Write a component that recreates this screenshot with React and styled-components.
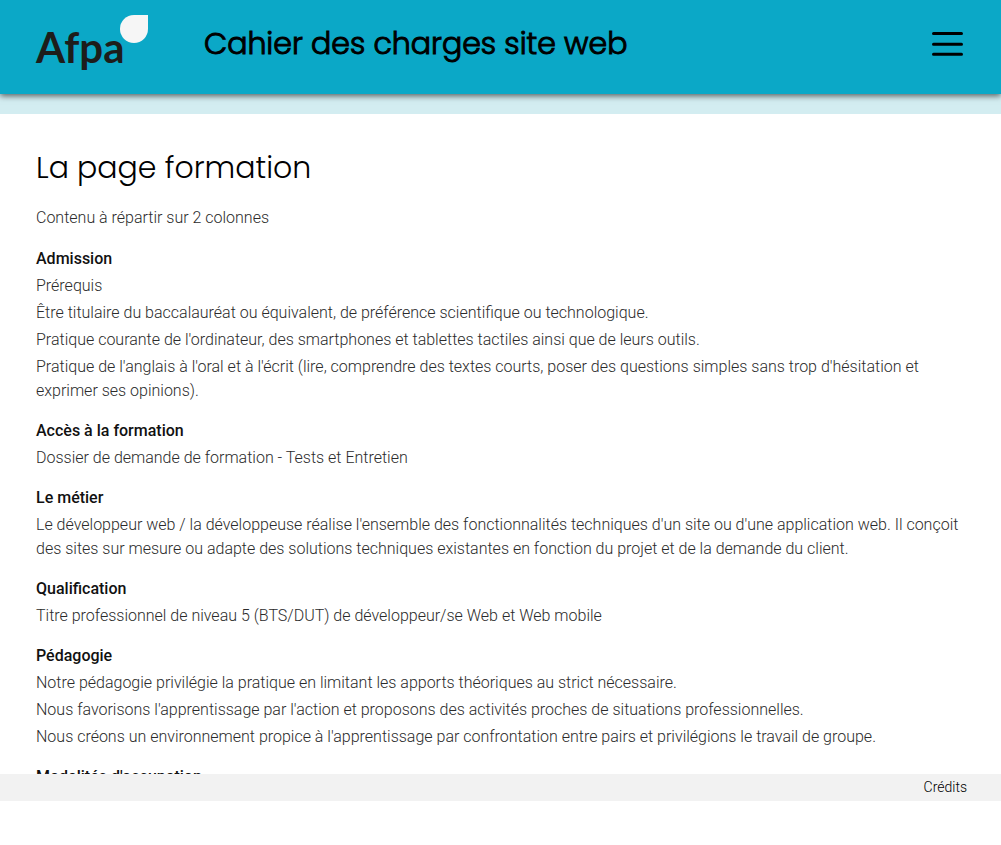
import React from "react";
import styled, { createGlobalStyle } from "styled-components";

const GlobalStyle = createGlobalStyle`
  *, *::before, *::after { box-sizing: border-box; }
  body {
    margin: 0;
    background: #fff;
    color: #2b2b2b;
    font: 300 16px/24px Roboto, sans-serif;
  }
  h1, h2, h3, p { margin: 0; }
`;

const titleFont = `Poppins, Inter, sans-serif`;

const Page = styled.div`
  display: flex;
  flex-direction: column;
  height: 100vh;
  padding-bottom: 44px;
`;

const Header = styled.header`
  flex: none;
  display: flex;
  align-items: center;
  height: 94px;
  padding: 0 36px 6px;
  background: #0ba8c7;
  box-shadow: 0 2px 6px rgba(0, 0, 0, 0.6);
  z-index: 1;
`;

const Logo = styled.a`
  display: flex;
  width: 112px;
  height: 58px;
  margin-right: 56px;
  color: #1d1d1b;
  font: 700 42px/64px Lato, sans-serif;
  text-decoration: none;
`;

const LogoName = styled.span`
  width: 84px;
  white-space: nowrap;
`;

const LogoDrop = styled.svg`
  flex: none;
  width: 28px;
  height: 28px;
`;

const SiteTitle = styled.h1`
  flex: 1;
  color: #000;
  font: 300 30px/48px ${titleFont};
  -webkit-text-stroke: 1px #000;
`;

const MenuButton = styled.button`
  display: flex;
  padding: 0;
  border: 0;
  background: none;
  cursor: pointer;
`;

const Band = styled.div`
  flex: none;
  height: 20px;
  background: #d3edf1;
`;

const Main = styled.main`
  flex: 1;
  min-height: 0;
  overflow: hidden;
  padding: 30px 36px 0;
`;

const PageTitle = styled.h2`
  margin-bottom: 14px;
  color: #000;
  font: 300 30px/48px ${titleFont};
`;

const Intro = styled.p`
  margin-bottom: 17px;
`;

const Section = styled.section`
  display: flex;
  flex-direction: column;
  gap: 3px;
  margin-bottom: 16px;
`;

const SectionTitle = styled.h3`
  color: #111;
  font-size: 16px;
  font-weight: 500;
`;

const Footer = styled.footer`
  flex: none;
  display: flex;
  justify-content: flex-end;
  height: 27px;
  padding: 0 34px;
  background: #f2f2f2;
`;

const FooterLink = styled.a`
  color: #000;
  font-size: 14px;
  line-height: 27px;
  text-decoration: none;
`;

const sections = [
  {
    title: "Admission",
    lines: [
      "Prérequis",
      "Être titulaire du baccalauréat ou équivalent, de préférence scientifique ou technologique.",
      "Pratique courante de l'ordinateur, des smartphones et tablettes tactiles ainsi que de leurs outils.",
      "Pratique de l'anglais à l'oral et à l'écrit (lire, comprendre des textes courts, poser des questions simples sans trop d'hésitation et exprimer ses opinions).",
    ],
  },
  {
    title: "Accès à la formation",
    lines: ["Dossier de demande de formation - Tests et Entretien"],
  },
  {
    title: "Le métier",
    lines: [
      "Le développeur web / la développeuse réalise l'ensemble des fonctionnalités techniques d'un site ou d'une application web. Il conçoit des sites sur mesure ou adapte des solutions techniques existantes en fonction du projet et de la demande du client.",
    ],
  },
  {
    title: "Qualification",
    lines: [
      "Titre professionnel de niveau 5 (BTS/DUT) de développeur/se Web et Web mobile",
    ],
  },
  {
    title: "Pédagogie",
    lines: [
      "Notre pédagogie privilégie la pratique en limitant les apports théoriques au strict nécessaire.",
      "Nous favorisons l'apprentissage par l'action et proposons des activités proches de situations professionnelles.",
      "Nous créons un environnement propice à l'apprentissage par confrontation entre pairs et privilégions le travail de groupe.",
    ],
  },
  { title: "Modalités d'occupation", lines: [] },
];

export default function App() {
  return (
    <Page>
      <GlobalStyle />
      <Header>
        <Logo href="#accueil">
          <LogoName>Afpa</LogoName>
          <LogoDrop viewBox="0 0 28 28" aria-hidden="true">
            <path d="M14 0H28V14A14 14 0 1 1 14 0Z" fill="#f6f6f6" />
          </LogoDrop>
        </Logo>
        <SiteTitle>Cahier des charges site web</SiteTitle>
        <MenuButton type="button" aria-label="Menu">
          <svg width="35" height="30" viewBox="0 0 35 30" aria-hidden="true">
            <path
              d="M3.5 4.5H31.5M3.5 15.2H31.5M3.5 25.3H31.5"
              fill="none"
              stroke="#000"
              strokeWidth="3"
              strokeLinecap="round"
            />
          </svg>
        </MenuButton>
      </Header>
      <Band />
      <Main>
        <PageTitle>La page formation</PageTitle>
        <Intro>Contenu à répartir sur 2 colonnes</Intro>
        {sections.map((section) => (
          <Section key={section.title}>
            <SectionTitle>{section.title}</SectionTitle>
            {section.lines.map((line) => (
              <p key={line}>{line}</p>
            ))}
          </Section>
        ))}
      </Main>
      <Footer>
        <FooterLink href="#credits">Crédits</FooterLink>
      </Footer>
    </Page>
  );
}
